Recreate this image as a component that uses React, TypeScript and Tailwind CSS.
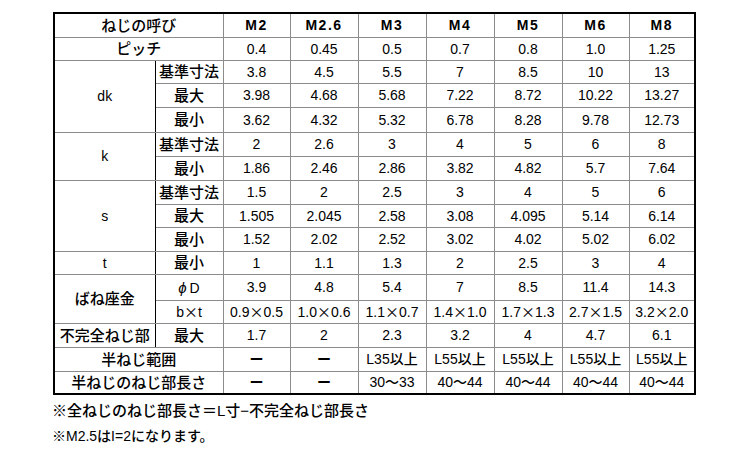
import type { ReactNode } from 'react'

const sizes = ['M2', 'M2.6', 'M3', 'M4', 'M5', 'M6', 'M8']

const cjk = "font-['Noto_Sans_CJK_JP',sans-serif]"
const X = () => <span className={`${cjk} text-[14px]`}>×</span>
const Dash = () => <span className="font-bold">ー</span>

const times = (a: string, b: string) => (
  <>
    {a}
    <X />
    {b}
  </>
)

type Row = {
  group?: { label: string; span: number }
  full?: string
  sub?: ReactNode
  values: ReactNode[]
  h: number
}

const rows: Row[] = [
  { full: 'ピッチ', values: ['0.4', '0.45', '0.5', '0.7', '0.8', '1.0', '1.25'], h: 23 },
  { group: { label: 'dk', span: 3 }, sub: '基準寸法', values: ['3.8', '4.5', '5.5', '7', '8.5', '10', '13'], h: 23 },
  { sub: '最大', values: ['3.98', '4.68', '5.68', '7.22', '8.72', '10.22', '13.27'], h: 24 },
  { sub: '最小', values: ['3.62', '4.32', '5.32', '6.78', '8.28', '9.78', '12.73'], h: 25 },
  { group: { label: 'k', span: 2 }, sub: '基準寸法', values: ['2', '2.6', '3', '4', '5', '6', '8'], h: 24 },
  { sub: '最小', values: ['1.86', '2.46', '2.86', '3.82', '4.82', '5.7', '7.64'], h: 24 },
  { group: { label: 's', span: 3 }, sub: '基準寸法', values: ['1.5', '2', '2.5', '3', '4', '5', '6'], h: 24 },
  { sub: '最大', values: ['1.505', '2.045', '2.58', '3.08', '4.095', '5.14', '6.14'], h: 23 },
  { sub: '最小', values: ['1.52', '2.02', '2.52', '3.02', '4.02', '5.02', '6.02'], h: 24 },
  { group: { label: 't', span: 1 }, sub: '最小', values: ['1', '1.1', '1.3', '2', '2.5', '3', '4'], h: 23 },
  {
    group: { label: 'ばね座金', span: 2 },
    sub: (
      <span className="font-normal text-[14px]">
        <span className="italic text-[15px] mr-[3px]">ϕ</span>D
      </span>
    ),
    values: ['3.9', '4.8', '5.4', '7', '8.5', '11.4', '14.3'],
    h: 26,
  },
  {
    sub: (
      <span className="font-normal text-[14px]">
        b<X />t
      </span>
    ),
    values: [
      times('0.9', '0.5'),
      times('1.0', '0.6'),
      times('1.1', '0.7'),
      times('1.4', '1.0'),
      times('1.7', '1.3'),
      times('2.7', '1.5'),
      times('3.2', '2.0'),
    ],
    h: 23,
  },
  { group: { label: '不完全ねじ部', span: 1 }, sub: '最大', values: ['1.7', '2', '2.3', '3.2', '4', '4.7', '6.1'], h: 24 },
  {
    full: '半ねじ範囲',
    values: [<Dash />, <Dash />, 'L35以上', 'L55以上', 'L55以上', 'L55以上', 'L55以上'],
    h: 24,
  },
  {
    full: '半ねじのねじ部長さ',
    values: [<Dash />, <Dash />, '30～33', '40～44', '40～44', '40～44', '40～44'],
    h: 23,
  },
]

const cell = 'border border-[#8c8c8c] text-center align-middle p-0 whitespace-nowrap'
const jp = 'text-[15px] font-medium'

export default function App() {
  return (
    <div className="w-[750px] h-[450px] bg-white text-black font-['Liberation_Sans','Noto_Sans_CJK_JP',sans-serif]">
      <div className="pl-[53px] pt-[12px]">
        <table className="border-collapse border-2 border-black text-[14px] leading-none table-fixed w-[641px]">
          <colgroup>
            <col className="w-[101px]" />
            <col className="w-[68px]" />
            <col className="w-[67px]" />
            <col className="w-[68px]" />
            <col className="w-[68px]" />
            <col className="w-[68px]" />
            <col className="w-[68px]" />
            <col className="w-[67px]" />
            <col className="w-[66px]" />
          </colgroup>
          <tbody>
            <tr className="h-[24px]">
              <td colSpan={2} className={`${cell} ${jp}`}>
                ねじの呼び
              </td>
              {sizes.map((s) => (
                <td key={s} className={`${cell} font-bold tracking-[1.5px]`}>
                  {s}
                </td>
              ))}
            </tr>
            {rows.map((r, i) => (
              <tr key={i} style={{ height: r.h }}>
                {r.full && (
                  <td colSpan={2} className={`${cell} ${jp}`}>
                    {r.full}
                  </td>
                )}
                {r.group && (
                  <td
                    rowSpan={r.group.span}
                    className={`${cell} border-r-black ${r.group.label.length > 2 ? jp : 'text-[14px]'}`}
                  >
                    {r.group.label}
                  </td>
                )}
                {r.sub && <td className={`${cell} ${jp}`}>{r.sub}</td>}
                {r.values.map((v, j) => (
                  <td key={j} className={`${cell} ${typeof v === 'string' && /[以～]/.test(v) ? 'font-medium' : ''}`}>
                    {v}
                  </td>
                ))}
              </tr>
            ))}
          </tbody>
        </table>
      </div>
      <div className="pl-[52px] pt-[3px] font-medium">
        <p className="text-[15px] leading-[26px]">※全ねじのねじ部長さ＝L寸−不完全ねじ部長さ</p>
        <p className="text-[14px] leading-[24px]">※M2.5はI=2になります。</p>
      </div>
    </div>
  )
}
